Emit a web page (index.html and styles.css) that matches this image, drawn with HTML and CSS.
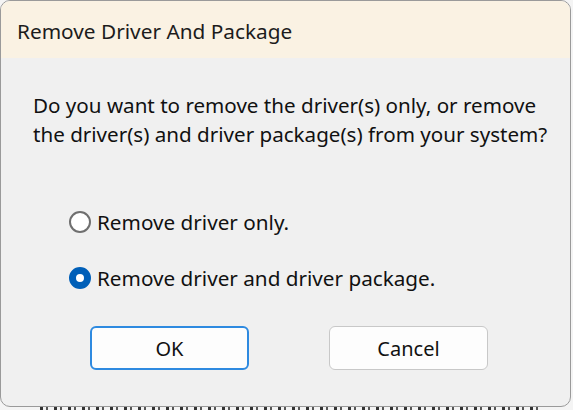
FILE: index.html
```html
<!DOCTYPE html>
<html>
<head>
<meta charset="utf-8">
<link rel="stylesheet" href="styles.css">
</head>
<body>
<div class="window">
  <div class="titlebar">Remove Driver And Package</div>
  <div class="content">
    <p class="question">Do you want to remove the driver(s) only, or remove<br>the driver(s) and driver package(s) from your system?</p>
    <div class="options">
      <label class="option"><span class="radio"></span><span>Remove driver only.</span></label>
      <label class="option"><span class="radio checked"></span><span>Remove driver and driver package.</span></label>
    </div>
    <div class="buttons">
      <button class="btn default">OK</button>
      <button class="btn">Cancel</button>
    </div>
  </div>
</div>
<div class="behind"></div>
</body>
</html>
```

FILE: styles.css
```css
html, body {
  margin: 0;
  padding: 0;
  background: #f4f4f4;
  overflow: hidden;
}
body {
  width: 573px;
  height: 410px;
  font-family: "Noto Sans", "Open Sans", sans-serif;
  color: #111;
}
.window {
  width: 569px;
  height: 405px;
  border: 1px solid #9a9a9a;
  border-radius: 10px;
  background: #f0f0f0;
  overflow: hidden;
  display: flex;
  flex-direction: column;
}
.titlebar {
  height: 57px;
  background: #faf2e3;
  box-sizing: border-box;
  padding: 16px 0 0 16px;
  font-size: 20.8px;
  line-height: 28px;
  color: #1c1c1c;
}
.content {
  flex: 1;
  padding: 33px 0 0 32px;
}
.question {
  margin: 0;
  font-size: 20.6px;
  line-height: 29px;
  color: #111;
}
.options {
  display: flex;
  flex-direction: column;
  gap: 28px;
  margin: 59px 0 0 36px;
}
.option {
  display: flex;
  align-items: center;
  gap: 6px;
  font-size: 20.7px;
  line-height: 28px;
}
.radio {
  box-sizing: border-box;
  width: 22px;
  height: 22px;
  border: 2px solid #6f6f6f;
  border-radius: 50%;
  background: #fff;
}
.radio.checked {
  border: 7px solid #005fb8;
}
.buttons {
  display: flex;
  gap: 80px;
  margin: 34px 0 0 57px;
}
.btn {
  width: 159px;
  height: 44px;
  border: 1px solid #c8c8c8;
  border-radius: 6px;
  background: #fdfdfd;
  font-family: inherit;
  font-size: 20px;
  color: #111;
  padding: 0;
}
.btn.default {
  border: 2px solid #2e8ae0;
}
.behind {
  height: 3px;
  margin-left: 40px;
  width: 500px;
  background: repeating-linear-gradient(90deg, #333 0 3px, transparent 3px 6px, #555 6px 8px, transparent 8px 14px);
}
```
